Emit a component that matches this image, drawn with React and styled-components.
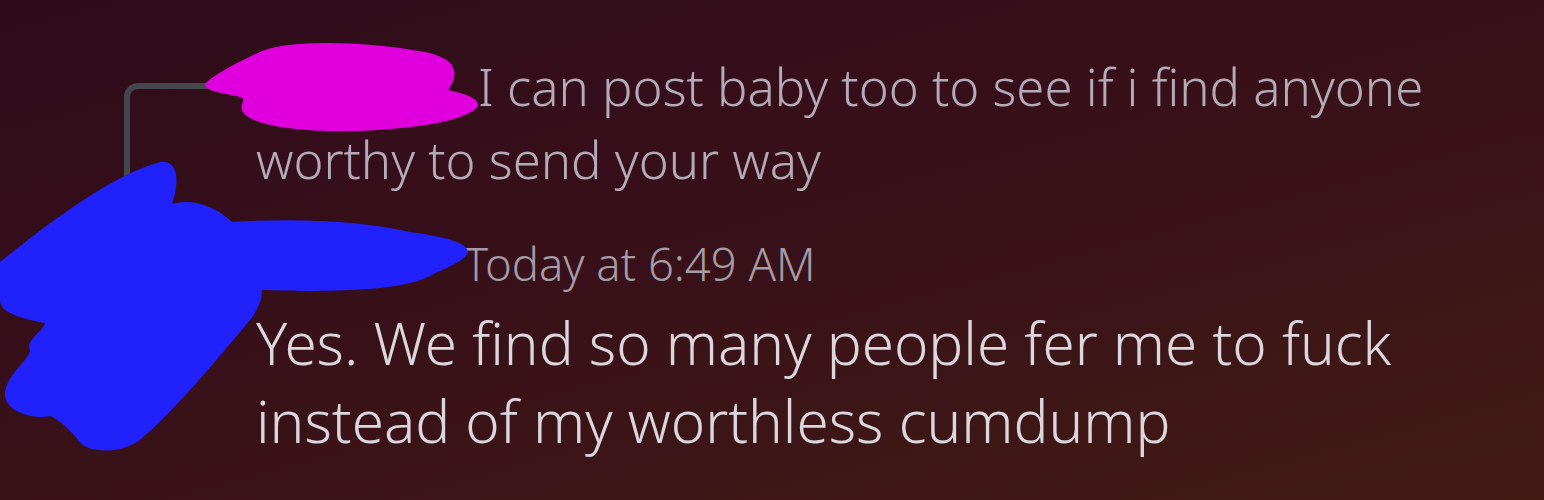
import React from "react";
import styled, { createGlobalStyle } from "styled-components";

const GlobalStyle = createGlobalStyle`
  html, body {
    margin: 0;
    padding: 0;
    background: #330f1a;
  }
`;

const Page = styled.div`
  position: relative;
  width: 1544px;
  height: 500px;
  overflow: hidden;
  background: linear-gradient(165deg, #2e0c1b 0%, #370f1a 40%, #3c1517 70%, #421c13 100%);
  font-family: "Noto Sans", "Open Sans", sans-serif;
  font-weight: 300;
`;

const Message = styled.div`
  display: grid;
  grid-template-columns: 256px 1220px;
  padding-top: 50px;
`;

const Gutter = styled.div`
  display: flex;
  align-items: flex-start;
`;

const Spine = styled.div`
  margin-left: 124px;
  margin-top: 33px;
  width: 90px;
  height: 110px;
  border-left: 6px solid #45464c;
  border-top: 6px solid #45464c;
  border-top-left-radius: 14px;
`;

const ReplyText = styled.div`
  font-size: 50.9px;
  line-height: 73px;
  color: #b4abb6;
`;

const AuthorSlot = styled.span`
  display: inline-block;
  width: ${(p) => p.width}px;
`;

const Header = styled.div`
  grid-column: 2;
  margin-top: 36px;
  font-size: 45.4px;
  line-height: 56px;
  height: 56px;
`;

const Timestamp = styled.span`
  color: #a59ca6;
`;

const Body = styled.div`
  grid-column: 2;
  margin-top: 13px;
  font-size: 58.4px;
  line-height: 78px;
  color: #ddd6dd;
`;

const Redactions = styled.svg`
  position: absolute;
  left: 0;
  top: 0;
  pointer-events: none;
`;

export default function App() {
  return (
    <>
      <GlobalStyle />
      <Page>
        <Message>
          <Gutter>
            <Spine />
          </Gutter>
          <ReplyText>
            <AuthorSlot width={222} />I can post baby too to see if i find anyone worthy to send your way
          </ReplyText>
          <Header>
            <AuthorSlot width={208} />
            <Timestamp>Today at 6:49 AM</Timestamp>
          </Header>
          <Body>Yes. We find so many people fer me to fuck instead of my worthless cumdump</Body>
        </Message>
        <Redactions width="1544" height="500" viewBox="0 0 1544 500">
          <path
            fill="#df00dd"
            d="M205,84 C215,74 238,62 260,52 C285,40 360,40 425,52 C448,57 460,66 452,84 L448,90 C462,93 480,98 478,106 C470,118 430,128 360,131 C300,133 250,125 243,112 C238,104 248,100 240,97 C225,93 205,92 205,84 Z"
          />
          <path
            fill="#2121fb"
            d="M0,262 C40,230 110,175 160,162 C178,160 180,180 172,204 C190,198 215,205 232,222 C290,218 360,220 410,232 C440,236 468,242 468,252 C465,262 440,270 430,276 C400,292 320,292 262,290 C262,300 258,310 250,320 C215,362 175,410 140,440 C118,456 85,452 78,440 C70,430 60,420 50,416 C30,420 5,410 5,395 C5,375 30,360 30,350 C25,340 45,330 45,323 C30,320 0,315 0,300 Z"
          />
        </Redactions>
      </Page>
    </>
  );
}
